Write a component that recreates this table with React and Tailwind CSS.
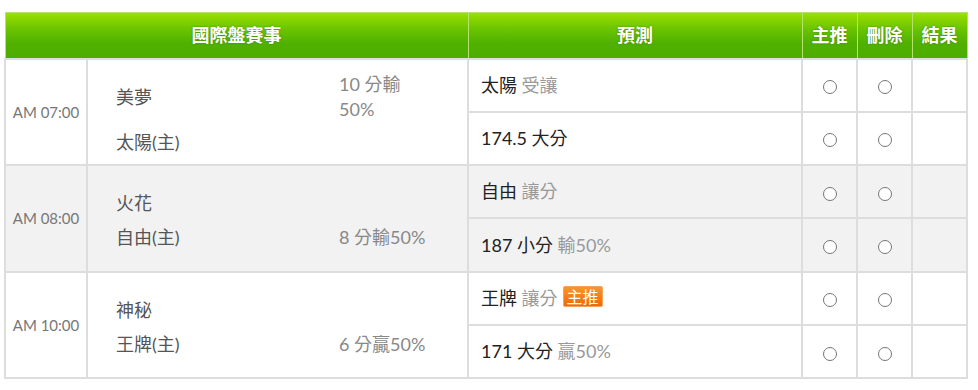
import React from "react";

const games = [
	{
		time: "AM 07:00",
		away: "美夢",
		home: "太陽(主)",
		odds: ["10 分輸", "50%"],
		oddsTop: true,
		gray: false,
		picks: [
			{ main: "太陽", sub: "受讓" },
			{ main: "174.5 大分", sub: "" },
		],
	},
	{
		time: "AM 08:00",
		away: "火花",
		home: "自由(主)",
		odds: ["8 分輸50%"],
		gray: true,
		picks: [
			{ main: "自由", sub: "讓分" },
			{ main: "187 小分", sub: "輸50%" },
		],
	},
	{
		time: "AM 10:00",
		away: "神秘",
		home: "王牌(主)",
		odds: ["6 分贏50%"],
		gray: false,
		picks: [
			{ main: "王牌", sub: "讓分", badge: true },
			{ main: "171 大分", sub: "贏50%" },
		],
	},
];

const headCell =
	"border border-[#b4e46c] text-white font-bold text-[18px] text-center [text-shadow:0_0_2px_rgba(40,90,0,0.6)]";
const cell = "border-2 border-[#dddddd]";

const Radio = () => (
	<span className="inline-block w-[14px] h-[14px] rounded-full border border-[#767676] bg-white align-middle" />
);

const MatchCell = ({ g }) => (
	<div className="grid grid-cols-[223px_1fr] pl-[28px] pt-[5px] text-[18px] text-[#555]">
		<div className={g.oddsTop ? "h-[56px] flex items-center" : "h-[34px] flex items-center"}>
			{g.away}
		</div>
		<div className={g.oddsTop ? "h-[56px] flex flex-col justify-center text-[#888] leading-[25px]" : "h-[34px]"}>
			{g.oddsTop && g.odds.map((o) => <div key={o}>{o}</div>)}
		</div>
		<div className="h-[34px] flex items-center">{g.home}</div>
		<div className="h-[34px] flex items-center text-[#888]">{!g.oddsTop && g.odds[0]}</div>
	</div>
);

export default function App() {
	return (
		<div className="bg-white w-[978px] h-[390px] pt-[12px] pl-[4px] font-['Lato','Noto_Sans_CJK_TC',sans-serif]">
			<table className="table-fixed border-collapse w-[962px]">
				<colgroup>
					<col className="w-[82px]" />
					<col className="w-[381px]" />
					<col className="w-[334px]" />
					<col className="w-[55px]" />
					<col className="w-[55px]" />
					<col className="w-[55px]" />
				</colgroup>
				<thead>
					<tr className="h-[46px] bg-[linear-gradient(#9be000,#6ac400_35%,#51b100_65%,#4cad00)]">
						<th colSpan={2} className={headCell}>國際盤賽事</th>
						<th className={headCell}>預測</th>
						<th className={headCell}>主推</th>
						<th className={headCell}>刪除</th>
						<th className={headCell}>結果</th>
					</tr>
				</thead>
				<tbody>
					{games.map((g) =>
						g.picks.map((p, i) => (
							<tr key={g.time + i} className={`h-[53.3px] ${g.gray ? "bg-[#f2f2f2]" : "bg-white"}`}>
								{i === 0 && (
									<>
										<td rowSpan={2} className={`${cell} text-center text-[15px] text-[#777]`}>
											{g.time}
										</td>
										<td rowSpan={2} className={cell}>
											<MatchCell g={g} />
										</td>
									</>
								)}
								<td className={`${cell} pl-[12px] text-[18px] text-[#222]`}>
									{p.main}
									{p.sub && <span className="text-[#999]"> {p.sub}</span>}
									{p.badge && (
										<span className="ml-[5px] inline-block align-[2px] px-[3px] h-[21px] leading-[19px] text-[16px] text-white rounded-[2px] border border-[#f6a35a] bg-[linear-gradient(#f7962e,#ee6a06)]">
											主推
										</span>
									)}
								</td>
								<td className={`${cell} text-center`}>
									<Radio />
								</td>
								<td className={`${cell} text-center`}>
									<Radio />
								</td>
								<td className={cell}></td>
							</tr>
						))
					)}
				</tbody>
			</table>
		</div>
	);
}
